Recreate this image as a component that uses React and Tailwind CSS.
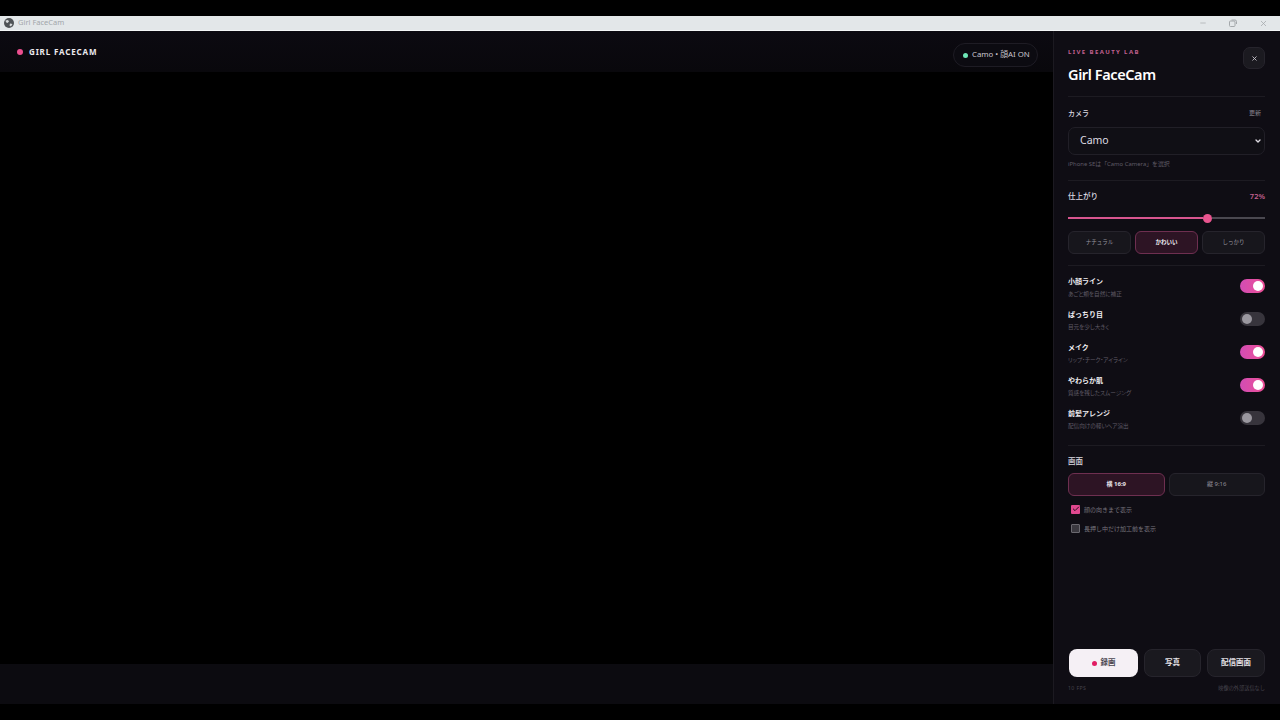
import { X, Minus, ChevronDown, Check } from 'lucide-react';

const font = { fontFamily: '"Noto Sans", "Noto Sans CJK JP", sans-serif' };

const toggles = [
  { title: '小顔ライン', sub: 'あごと頬を自然に補正', on: true },
  { title: 'ぱっちり目', sub: '目元を少し大きく', on: false },
  { title: 'メイク', sub: 'リップ・チーク・アイライン', on: true },
  { title: 'やわらか肌', sub: '質感を残したスムージング', on: true },
  { title: '前髪アレンジ', sub: '配信向けの軽いヘア演出', on: false },
];

function Toggle({ title, sub, on }) {
  return (
    <div className="flex h-[33px] items-center justify-between">
      <div className="flex flex-col pt-[4px]">
        <span className="text-[7px] leading-[12px] font-bold text-[#f0edf2]">{title}</span>
        <span className="mt-[2px] text-[5.6px] leading-[9px] text-[#5f5b66] [font-feature-settings:'palt']">{sub}</span>
      </div>
      <div className={on
        ? 'flex h-[14px] w-[25px] items-center justify-end rounded-full bg-gradient-to-r from-[#d24cb4] to-[#ee4f96] px-[2px]'
        : 'flex h-[14px] w-[25px] items-center justify-start rounded-full bg-[#37343c] px-[2px]'}>
        <div className={on ? 'h-[10px] w-[10px] rounded-full bg-white' : 'h-[10px] w-[10px] rounded-full bg-[#9a979f]'} />
      </div>
    </div>
  );
}

export default function App() {
  return (
    <div className="flex h-[720px] w-[1280px] flex-col overflow-hidden bg-black" style={font}>
      <div className="h-4 bg-black" />

      {/* title bar */}
      <div className="flex h-[15px] items-center justify-between border-b border-[#f4f6f7] bg-[#e3e7e9]">
        <div className="flex items-center gap-[4px] pl-[4px]">
          <svg width="10" height="10" viewBox="0 0 10 10" className="text-[#4f5356]">
            <circle cx="5" cy="5" r="5" fill="currentColor" />
            <path d="M1.5 2.5 4 2l1 1.5-1.5 1.5L2 4.2zM6 5.5l2.5.5L7 8.5 5.5 7.5z" fill="#d9dcde" />
          </svg>
          <span className="text-[7.5px] text-[#a2a6a9]">Girl FaceCam</span>
        </div>
        <div className="flex items-center gap-[22px] pr-[12px] text-[#a4a8ab]">
          <Minus size={8} />
          <svg width="8" height="8" viewBox="0 0 8 8" fill="none" stroke="currentColor">
            <rect x="0.5" y="2" width="5.5" height="5.5" rx="1" />
            <path d="M2.5 1h3.5a1.5 1.5 0 0 1 1.5 1.5V5" />
          </svg>
          <X size={9} />
        </div>
      </div>

      <div className="flex min-h-0 flex-1">
        {/* preview */}
        <div className="flex flex-1 flex-col bg-black">
          <div className="flex h-[41px] items-start justify-between bg-gradient-to-b from-[#0c0a11] to-[#09080c] pr-[15px] pl-[17px]">
            <div className="mt-[14px] flex items-center gap-[6px]">
              <div className="h-[6px] w-[6px] rounded-full bg-[#ec4f8f]" />
              <span className="text-[8px] leading-[13px] font-bold tracking-[0.85px] text-[#ece9ee]">GIRL FACECAM</span>
            </div>
            <div className="mt-[12px] flex h-[24px] w-[85px] shrink-0 items-center gap-[4px] rounded-full border border-[#1e1c24] bg-[#0c0b11] pl-[9px]">
              <div className="h-[5px] w-[5px] rounded-full bg-[#6ee7b7]" />
              <span className="text-[7.8px] whitespace-nowrap text-[#c9c6ce]">Camo • 顔AI ON</span>
            </div>
          </div>
          <div className="flex-1 bg-black" />
          <div className="h-10 bg-[#0c0b10]" />
        </div>

        {/* settings panel */}
        <div className="flex h-full w-[227px] shrink-0 flex-col border-l border-[#1c1a21] bg-[#0f0d14] pr-[15px] pl-[14px]">
          <div className="relative h-[65px] shrink-0 pt-[16px]">
            <div className="text-[6px] leading-[10px] font-bold tracking-[1.4px] text-[#c0608f]">LIVE BEAUTY LAB</div>
            <div className="mt-[6px] text-[14.5px] leading-[22px] font-semibold tracking-[-0.4px] text-white">Girl FaceCam</div>
            <div className="absolute top-[16px] right-0 flex h-[22px] w-[22px] items-center justify-center rounded-[7px] border border-[#26242c] bg-[#1b1a20] text-[#c9c6ce]">
              <X size={7} strokeWidth={3} />
            </div>
          </div>

          {/* camera */}
          <div className="h-[84px] shrink-0 border-t border-[#1d1b22] pt-[10px]">
            <div className="flex items-center justify-between pr-[4px]">
              <span className="text-[7px] leading-[13px] font-medium text-[#dedbe2]">カメラ</span>
              <span className="text-[6px] leading-[13px] text-[#8a8790]">更新</span>
            </div>
            <div className="mt-[7px] flex h-[28px] items-center justify-between rounded-[7px] border border-[#211f27] bg-[#100f15] pr-[2px] pl-[11px]">
              <span className="text-[10.5px] text-[#dedbe2]">Camo</span>
              <ChevronDown size={8} strokeWidth={4} className="text-[#dedbe2]" />
            </div>
            <div className="mt-[4px] text-[5.9px] leading-[10px] text-[#5f5b66]">iPhone SEは「Camo Camera」を選択</div>
          </div>

          {/* finish */}
          <div className="h-[85px] shrink-0 border-t border-[#1d1b22] pt-[9px]">
            <div className="flex items-center justify-between">
              <span className="text-[7.5px] leading-[13px] font-medium text-[#dedbe2]">仕上がり</span>
              <span className="text-[7.5px] leading-[13px] font-semibold text-[#c2608f]">72%</span>
            </div>
            <div className="mt-[10px] flex h-[10px] items-center">
              <div className="h-[2px] w-[135px] bg-[#d8558f]" />
              <div className="h-[9px] w-[9px] shrink-0 rounded-full bg-[#e9558f]" />
              <div className="h-[2px] flex-1 bg-[#4a4850]" />
            </div>
            <div className="mt-[8px] grid grid-cols-[63px_63px_63px] gap-[4px]">
              <div className="flex h-[23px] items-center justify-center rounded-[6px] border border-[#26242c] bg-[#17161c] text-[5.5px] text-[#96939c]">ナチュラル</div>
              <div className="flex h-[23px] items-center justify-center rounded-[6px] border border-[#6e2f50] bg-[#2d1424] text-[5.5px] font-bold text-[#f0edf2]">かわいい</div>
              <div className="flex h-[23px] items-center justify-center rounded-[6px] border border-[#26242c] bg-[#17161c] text-[5.5px] text-[#96939c]">しっかり</div>
            </div>
          </div>

          {/* toggles */}
          <div className="h-[180px] shrink-0 border-t border-[#1d1b22] pt-[3px]">
            {toggles.map((t) => <Toggle key={t.title} {...t} />)}
          </div>

          {/* screen */}
          <div className="border-t border-[#1d1b22] pt-[9px]">
            <div className="text-[7.5px] leading-[13px] font-medium text-[#dedbe2]">画面</div>
            <div className="mt-[5px] grid grid-cols-2 gap-[4px]">
              <div className="flex h-[23px] items-center justify-center rounded-[6px] border border-[#6e2f50] bg-[#2d1424] text-[6px] font-bold text-[#e6e3e8]">横 16:9</div>
              <div className="flex h-[23px] items-center justify-center rounded-[6px] border border-[#26242c] bg-[#17161c] text-[6px] text-[#96939c]">縦 9:16</div>
            </div>
            <div className="mt-[7px] flex h-[12px] items-center gap-[4px] pl-[3px]">
              <div className="flex h-[9px] w-[9px] items-center justify-center rounded-[1px] bg-[#e0488f] text-[#28101c]">
                <Check size={8} strokeWidth={3} />
              </div>
              <span className="mt-[3px] text-[6px] text-[#77747d]">顔の向きまで表示</span>
            </div>
            <div className="mt-[7px] flex h-[12px] items-center gap-[4px] pl-[3px]">
              <div className="h-[9px] w-[9px] rounded-[1px] border border-[#6a686f] bg-[#3a383f]" />
              <span className="mt-[3px] text-[6px] text-[#77747d]">長押し中だけ加工前を表示</span>
            </div>
          </div>

          {/* actions */}
          <div className="mt-auto flex items-center gap-[6px] pl-[1px]">
            <div className="flex h-[28px] w-[69px] items-center justify-center gap-[4px] rounded-[8px] bg-[#f5f0f5] text-[7.5px] font-bold text-[#4a4650]">
              <div className="h-[5px] w-[5px] rounded-full bg-[#e11d63]" />
              録画
            </div>
            <div className="flex h-[28px] w-[57px] items-center justify-center rounded-[8px] border border-[#26242c] bg-[#1a191f] text-[7.5px] font-bold text-[#e6e3e8]">写真</div>
            <div className="flex h-[28px] flex-1 items-center justify-center rounded-[8px] border border-[#26242c] bg-[#1a191f] text-[7.5px] font-bold text-[#e6e3e8]">配信画面</div>
          </div>
          <div className="mt-[7px] mb-[11px] flex items-center justify-between text-[5.2px] leading-[9px] text-[#47444d]">
            <span className="tracking-[0.4px]">10 FPS</span>
            <span>映像の外部送信なし</span>
          </div>
        </div>
      </div>

      <div className="h-4 bg-black" />
    </div>
  );
}
